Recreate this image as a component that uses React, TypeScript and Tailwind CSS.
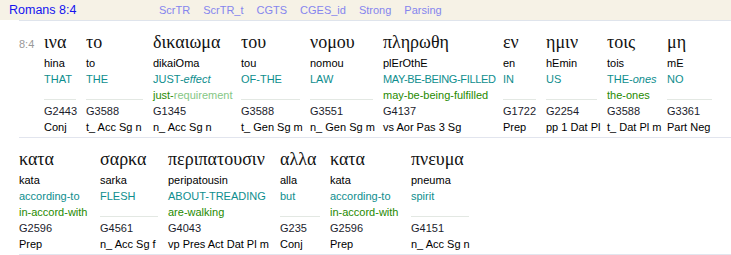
import type { ReactNode } from 'react'

interface Word {
  greek: string
  translit: string
  gloss: ReactNode
  alt?: ReactNode
  strong: string
  parsing: string
  w: string
  tight?: boolean
}

// column widths follow the interlinear layout of the page
const line1: Word[] = [
  { greek: 'ινα', translit: 'hina', gloss: 'THAT', strong: 'G2443', parsing: 'Conj', w: 'w-[32px]' },
  { greek: 'το', translit: 'to', gloss: 'THE', strong: 'G3588', parsing: 't_ Acc Sg n', w: 'w-[57px]' },
  {
    greek: 'δικαιωμα',
    translit: 'dikaiOma',
    gloss: (
      <>
        JUST-<i>effect</i>
      </>
    ),
    alt: (
      <>
        just-<span className="text-[#85c785]">requirement</span>
      </>
    ),
    strong: 'G1345',
    parsing: 'n_ Acc Sg n',
    w: 'w-[78px]',
  },
  { greek: 'του', translit: 'tou', gloss: 'OF-THE', strong: 'G3588', parsing: 't_ Gen Sg m', w: 'w-[59px]' },
  { greek: 'νομου', translit: 'nomou', gloss: 'LAW', strong: 'G3551', parsing: 'n_ Gen Sg m', w: 'w-[63px]' },
  {
    greek: 'πληρωθη',
    translit: 'plErOthE',
    gloss: 'MAY-BE-BEING-FILLED',
    alt: 'may-be-being-fulfilled',
    strong: 'G4137',
    parsing: 'vs Aor Pas 3 Sg',
    w: 'w-[110px]',
    tight: true,
  },
  { greek: 'εν', translit: 'en', gloss: 'IN', strong: 'G1722', parsing: 'Prep', w: 'w-[33px]' },
  { greek: 'ημιν', translit: 'hEmin', gloss: 'US', strong: 'G2254', parsing: 'pp 1 Dat Pl', w: 'w-[51px]' },
  {
    greek: 'τοις',
    translit: 'tois',
    gloss: (
      <>
        THE-<i>ones</i>
      </>
    ),
    alt: 'the-ones',
    strong: 'G3588',
    parsing: 't_ Dat Pl m',
    w: 'w-[50px]',
  },
  { greek: 'μη', translit: 'mE', gloss: 'NO', strong: 'G3361', parsing: 'Part Neg', w: 'w-[45px]' },
]

const line2: Word[] = [
  {
    greek: 'κατα',
    translit: 'kata',
    gloss: 'according-to',
    alt: 'in-accord-with',
    strong: 'G2596',
    parsing: 'Prep',
    w: 'w-[71px]',
  },
  { greek: 'σαρκα', translit: 'sarka', gloss: 'FLESH', strong: 'G4561', parsing: 'n_ Acc Sg f', w: 'w-[58px]' },
  {
    greek: 'περιπατουσιν',
    translit: 'peripatousin',
    gloss: 'ABOUT-TREADING',
    alt: 'are-walking',
    strong: 'G4043',
    parsing: 'vp Pres Act Dat Pl m',
    w: 'w-[102px]',
  },
  { greek: 'αλλα', translit: 'alla', gloss: 'but', strong: 'G235', parsing: 'Conj', w: 'w-[40px]' },
  {
    greek: 'κατα',
    translit: 'kata',
    gloss: 'according-to',
    alt: 'in-accord-with',
    strong: 'G2596',
    parsing: 'Prep',
    w: 'w-[71px]',
  },
  { greek: 'πνευμα', translit: 'pneuma', gloss: 'spirit', strong: 'G4151', parsing: 'n_ Acc Sg n', w: 'w-[58px]' },
]

const links = ['ScrTR', 'ScrTR_t', 'CGTS', 'CGES_id', 'Strong', 'Parsing']

function WordCell({ w }: { w: Word }) {
  return (
    <div className={`flex flex-col shrink-0 mr-[10px] whitespace-nowrap ${w.w}`}>
      <div className="text-[18px] leading-[26px] text-[#111] font-['Liberation_Serif',serif]">{w.greek}</div>
      <div className="leading-4 text-black">{w.translit}</div>
      <div className={`leading-4 text-[#0e8e8e] ${w.tight ? 'tracking-[-0.35px]' : ''}`}>{w.gloss}</div>
      {w.alt ? (
        <div className="leading-4 text-[#1f8a00]">{w.alt}</div>
      ) : (
        <div className="h-4">
          <div className="h-[13px] border-b border-[#e3e8e3]" />
        </div>
      )}
      <div className="leading-4 text-[#1c1c2c]">{w.strong}</div>
      <div className="leading-4 text-black">{w.parsing}</div>
    </div>
  )
}

export default function App() {
  return (
    <div className="w-[731px] h-[255px] bg-white overflow-hidden font-['Liberation_Sans',Arial,sans-serif] text-[11px]">
      {/* Header */}
      <div className="h-5 bg-[#f6f2e6] flex items-center pl-[9px]">
        <span className="w-[150px] shrink-0 text-[12.5px] text-[#1414f0]">Romans 8:4</span>
        <div className="flex gap-[13px] text-[11px] text-[#8585ee]">
          {links.map((l) => (
            <span key={l}>{l}</span>
          ))}
        </div>
      </div>

      {/* Verse */}
      <div className="ml-[19px] border-t border-[#dfe4ec]">
        <div className="flex pt-[8px] pb-[2px] border-b border-[#e2e5ee]">
          <div className="w-[25px] shrink-0 pt-[2px] text-[#999] leading-[26px]">8:4</div>
          {line1.map((w, i) => (
            <WordCell key={i} w={w} />
          ))}
        </div>
        <div className="flex pt-[8px] pb-[2px] border-b border-[#e2e5ee]">
          {line2.map((w, i) => (
            <WordCell key={i} w={w} />
          ))}
        </div>
      </div>
    </div>
  )
}
